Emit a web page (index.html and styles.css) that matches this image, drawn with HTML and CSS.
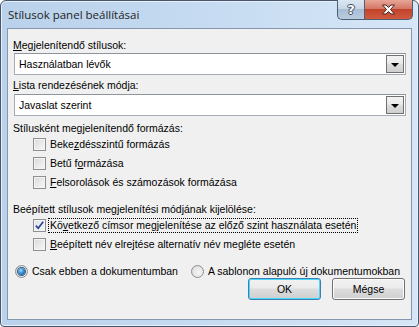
FILE: index.html
```html
<!DOCTYPE html>
<html lang="hu">
<head>
<meta charset="utf-8">
<link rel="stylesheet" href="styles.css">
</head>
<body>
<div class="window">
  <div class="titlebar">
    <span class="title">Stílusok panel beállításai</span>
    <div class="capbtns">
      <div class="capbtn help"><span>?</span></div>
      <div class="capbtn close">
        <svg width="15" height="11" viewBox="0 0 15 11"><path d="M1.5 1 L5 1 L7.5 3.5 L10 1 L13.5 1 L9.5 5.5 L13.5 10 L10 10 L7.5 7.5 L5 10 L1.5 10 L5.5 5.5 Z" fill="#fff" stroke="#43231c" stroke-width="1" stroke-linejoin="round"/></svg>
      </div>
    </div>
  </div>
  <div class="client">
    <div class="label l1"><u>M</u>egjelenítendő stílusok:</div>
    <div class="combo c1"><span class="val">Használatban lévők</span><span class="drop"><i></i></span></div>
    <div class="label l2"><u>L</u>ista rendezésének módja:</div>
    <div class="combo c2"><span class="val">Javaslat szerint</span><span class="drop"><i></i></span></div>
    <div class="label l3">Stílusként megjelenítendő formázás:</div>
    <div class="check r1"><span class="box"></span><span class="txt">Beke<u>z</u>désszintű formázás</span></div>
    <div class="check"><span class="box"></span><span class="txt">Betű f<u>o</u>rmázása</span></div>
    <div class="check"><span class="box"></span><span class="txt"><u>F</u>elsorolások és számozások formázása</span></div>
    <div class="label l4">Beépített stílusok megjelenítési módjának kijelölése:</div>
    <div class="check r4"><span class="box checked"><svg width="9" height="9" viewBox="0 0 9 9"><path d="M0.8 4.6 L3.2 7.2 L8.2 0.8" fill="none" stroke="#2b3f8f" stroke-width="1.6"/></svg></span><span class="txt focus">Kö<u>v</u>etkező címsor megjelenítése az előző szint használata esetén</span></div>
    <div class="check"><span class="box"></span><span class="txt"><u>B</u>eépített név elrejtése alternatív név megléte esetén</span></div>
    <div class="radios">
      <div class="radio"><span class="dot on"><i></i></span><span class="rtxt">Csak ebben a dokumentumban</span></div>
      <div class="radio r2"><span class="dot"></span><span class="rtxt">A sablonon alapuló új dokumentumokban</span></div>
    </div>
    <div class="buttons">
      <div class="btn default">OK</div>
      <div class="btn">Mégse</div>
    </div>
  </div>
</div>
</body>
</html>
```
FILE: styles.css
```css
* { box-sizing: border-box; }
html, body { margin: 0; padding: 0; background: #ffffff; }
body { width: 419px; height: 327px; overflow: hidden; font-family: "Liberation Sans", Arial, sans-serif; font-size: 10.5px; color: #000; }

.window {
  width: 419px; height: 327px;
  border: 1px solid #47566a;
  border-radius: 6px 6px 4px 4px;
  background: linear-gradient(90deg, #b9d1ea 0%, #c3d9f0 40%, #d6e6f7 100%);
  padding: 0 6px 6px 6px;
  display: flex; flex-direction: column;
  box-shadow: inset 0 0 0 1px #e8f1fb;
}

.titlebar { height: 27px; display: flex; align-items: flex-start; justify-content: space-between; }
.title { font-family: "Open Sans", "Liberation Sans", sans-serif; font-size: 11.5px; color: #1e1e1e; margin-top: 6px; margin-left: 1px; }

.capbtns { display: flex; margin-right: -1px; margin-top: -1px; }
.capbtn { height: 20px; border: 1px solid #4f5f72; border-top: none; display: flex; align-items: center; justify-content: center; }
.help { width: 27px; border-radius: 0 0 0 5px; border-right: none; background: linear-gradient(180deg, #dbe6f2 0%, #c8d7e8 45%, #aabdd4 50%, #b8cbe0 100%); }
.help span { font-family: "DejaVu Sans", sans-serif; font-weight: bold; font-size: 13px; color: #fff; text-shadow: 1px 0 0 #3b4b5e, -1px 0 0 #3b4b5e, 0 1px 0 #3b4b5e, 0 -1px 0 #3b4b5e; line-height: 1; }
.close { width: 49px; border-radius: 0 0 5px 0; background: linear-gradient(180deg, #e8a697 0%, #d57766 45%, #c2432b 50%, #cf5b3f 100%); }

.client {
  flex: 1;
  border: 1px solid #8497ad;
  background: #f0f0f0;
  padding: 10px 5px 0 5px;
  display: flex; flex-direction: column;
}

.label { height: 13px; line-height: 13px; white-space: nowrap; }
.l2 { margin-top: 4px; }
.l3 { margin-top: 6px; }
.l4 { margin-top: 11px; }

.combo {
  height: 22px; margin-top: 1px; margin-left: 1px;
  border: 1px solid #a5acb5;
  border-top-color: #8d949c;
  background: #fff;
  display: flex; align-items: center; justify-content: space-between;
  padding: 0 1px 0 4px;
}
.c2 { margin-top: 2px; }
.val { white-space: nowrap; }
.drop {
  width: 18px; height: 18px;
  border: 1px solid #707070;
  background: linear-gradient(180deg, #f2f2f2 0%, #ebebeb 45%, #dddddd 50%, #cfcfcf 100%);
  display: flex; align-items: center; justify-content: center;
}
.drop i { width: 0; height: 0; border-left: 4px solid transparent; border-right: 4px solid transparent; border-top: 4px solid #000; margin-top: 1px; }

.check { height: 19px; display: flex; align-items: center; padding-left: 20px; white-space: nowrap; }
.box {
  width: 13px; height: 13px; flex: none;
  border: 1px solid #8e8f8f;
  background: linear-gradient(135deg, #d9d9d9 0%, #ececec 60%, #f8f8f8 100%);
  box-shadow: inset 0 0 0 1px #f4f4f4;
  display: flex; align-items: center; justify-content: center;
  margin-right: 2px;
}
.box.checked { background: linear-gradient(135deg, #e0e6ee 0%, #f0f2f6 100%); }
.txt { padding: 0 1px; line-height: 13px; border: 1px dotted transparent; }
.txt.focus { border-color: #000; }

.radios { display: flex; align-items: center; margin-top: 11px; height: 13px; padding-left: 2px; white-space: nowrap; }
.radio { display: flex; align-items: center; }
.r2 { margin-left: 13px; }
.dot {
  width: 13px; height: 13px; border-radius: 50%; flex: none;
  border: 1px solid #8e8f8f;
  background: radial-gradient(circle at 60% 60%, #f6f6f6 0%, #d6d6d6 100%);
  display: flex; align-items: center; justify-content: center;
  margin-right: 4px;
}
.dot.on i { width: 7px; height: 7px; border-radius: 50%; background: radial-gradient(circle at 40% 35%, #a8dcf8 0%, #3c8fd0 45%, #123f74 100%); box-shadow: 0 0 0 1px #325e87; }
.rtxt { line-height: 13px; }

.buttons { display: flex; justify-content: flex-end; gap: 11px; margin-top: 0; padding-right: 1px; }
.btn {
  width: 73px; height: 22px;
  border: 1px solid #707070; border-radius: 3px;
  background: linear-gradient(180deg, #f2f2f2 0%, #ebebeb 45%, #dddddd 50%, #cfcfcf 100%);
  box-shadow: inset 0 0 0 1px #fcfcfc;
  display: flex; align-items: center; justify-content: center;
}
.btn.default { border-color: #3c7fb1; box-shadow: inset 0 0 0 1px #48d8fb; }
```
